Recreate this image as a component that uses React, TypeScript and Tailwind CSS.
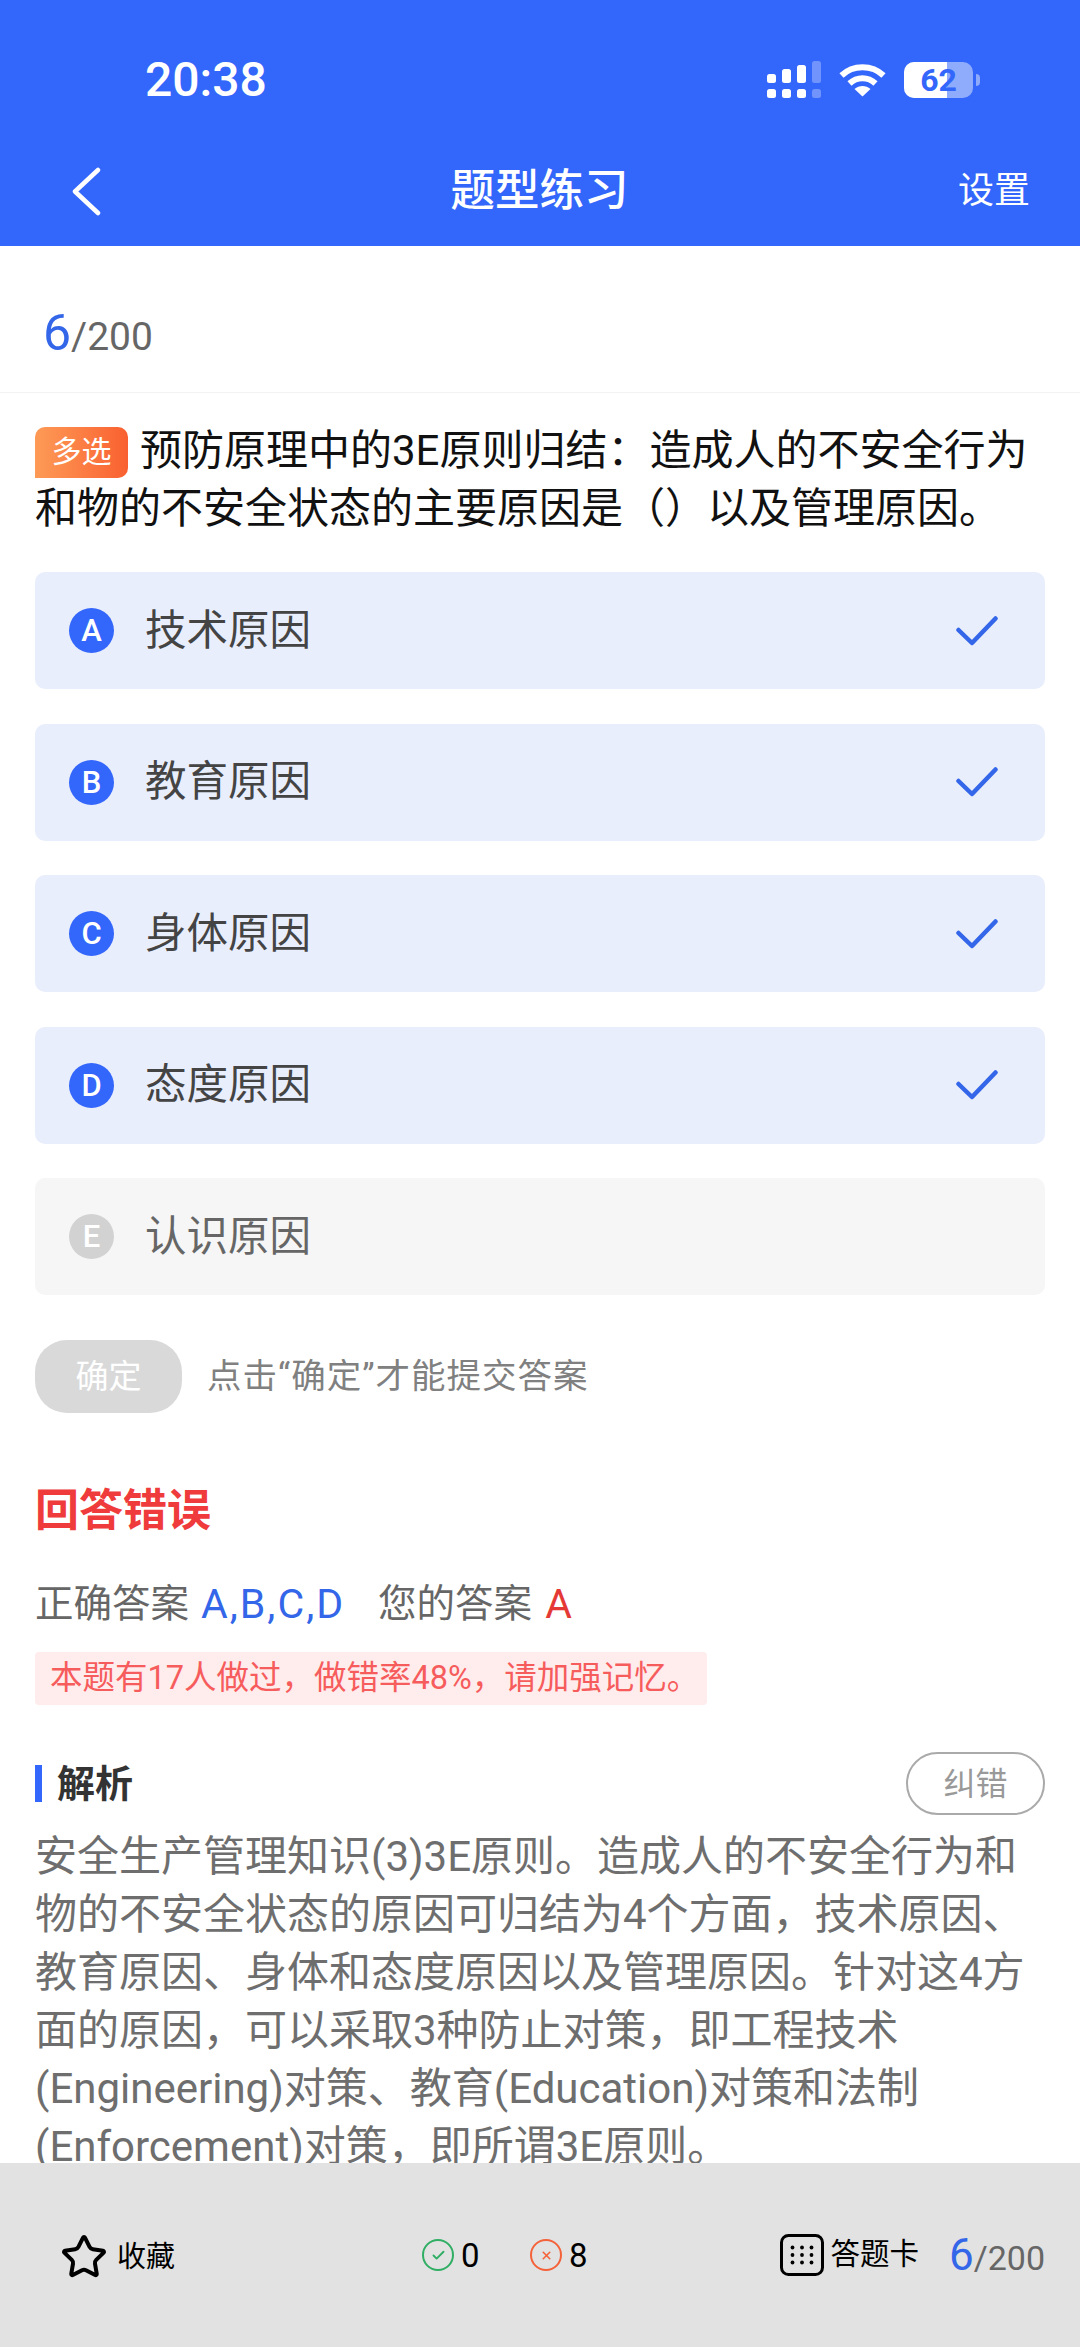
import { Check, Star, X } from "lucide-react";

const FONT = "[font-family:Roboto,'Noto_Sans_CJK_SC',sans-serif]";

const options = [
  { letter: "A", text: "技术原因", selected: true },
  { letter: "B", text: "教育原因", selected: true },
  { letter: "C", text: "身体原因", selected: true },
  { letter: "D", text: "态度原因", selected: true },
  { letter: "E", text: "认识原因", selected: false },
];

function SignalIcon() {
  return (
    <svg width="54" height="38" viewBox="0 0 54 38" fill="#fff">
      <rect x="0" y="13" width="9" height="9" rx="2.5" />
      <rect x="15" y="8" width="9" height="14" rx="2.5" />
      <rect x="30" y="4" width="9" height="18" rx="2.5" />
      <rect x="45" y="0" width="9" height="22" rx="2.5" opacity="0.3" />
      <rect x="0" y="28" width="9" height="9" rx="2.5" />
      <rect x="15" y="28" width="9" height="9" rx="2.5" />
      <rect x="30" y="28" width="9" height="9" rx="2.5" />
      <rect x="45" y="28" width="9" height="9" rx="2.5" opacity="0.3" />
    </svg>
  );
}

function WifiIcon() {
  return (
    <svg width="47" height="34" viewBox="0 0 47 34" fill="none" stroke="#fff" strokeWidth="6">
      <path d="M2.5 12.5C14 1.5 33 1.5 44.500 12.5" />
      <path d="M10.500 20.500C18 13.500 29 13.500 36.500 20.500" />
      <path d="M23.500 33.500L15.500 26C20 22 27 22 31.500 26Z" fill="#fff" stroke="none" />
    </svg>
  );
}

function BatteryIcon() {
  return (
    <div className="flex items-center gap-[3px]">
      <div className="relative h-[36px] w-[69px] rounded-[10px] bg-white/45">
        <div className="h-full w-[43px] rounded-l-[10px] bg-white" />
        <span className="absolute inset-0 flex items-center justify-center text-[32px] font-bold leading-none text-[#3366fa]">
          62
        </span>
      </div>
      <div className="h-[12px] w-[4px] rounded-r-full bg-white/45" />
    </div>
  );
}

function BackIcon() {
  return (
    <svg width="30" height="49" viewBox="0 0 30 49" fill="none" stroke="#fff" strokeWidth="4.500" strokeLinecap="round" strokeLinejoin="round">
      <path d="M27 3L4 24.500L27 46" />
    </svg>
  );
}

function OptionCheck() {
  return (
    <svg width="42" height="30" viewBox="0 0 42 30" fill="none" stroke="#3366e8" strokeWidth="4.500" strokeLinecap="round" strokeLinejoin="round">
      <path d="M2.500 14L16 27L39.500 2.500" />
    </svg>
  );
}

function GridIcon() {
  return (
    <svg width="44" height="42" viewBox="0 0 44 42" fill="none">
      <rect x="1.500" y="1.500" width="41" height="39" rx="7" stroke="#000" strokeWidth="3" />
      {[13.5, 21, 28.5].map((y) =>
        [12.5, 22, 31.5].map((x) => <circle key={`${x}-${y}`} cx={x} cy={y} r="1.900" fill="#000" />),
      )}
    </svg>
  );
}

function Progress({ large, small }: { large: string; small: string }) {
  return (
    <span className="leading-none text-[#666]">
      <span className={`${large} text-[#3366e8]`}>6</span>
      <span className={small}>/200</span>
    </span>
  );
}

export default function App() {
  return (
    <div className={`flex h-[2347px] w-[1080px] flex-col overflow-hidden bg-white ${FONT}`}>
      {/* Header */}
      <header className="h-[246px] shrink-0 bg-[#3366fa] text-white">
        <div className="flex h-[120px] items-center justify-between pl-[145px] pr-[100px] pt-[40px]">
          <span className="text-[48px] font-medium leading-none">20:38</span>
          <div className="flex items-center gap-[18px]">
            <SignalIcon />
            <WifiIcon />
            <BatteryIcon />
          </div>
        </div>
        <div className="flex h-[126px] items-center justify-between pl-[71px] pr-[50px] pt-[16px]">
          <BackIcon />
          <h1 className="ml-[20px] text-[44.500px] font-medium leading-none">题型练习</h1>
          <span className="text-[36px] leading-none">设置</span>
        </div>
      </header>

      {/* Scrollable body */}
      <main className="min-h-0 flex-1 overflow-hidden">
        <div className="flex h-[147px] items-center border-b border-[#f3f3f3] pl-[43px] pt-[28px]">
          <Progress large="text-[50px]" small="text-[39px]" />
        </div>

        <div className="px-[35px]">
          <p className="mt-[29px] text-[42px] leading-[58px] text-[#111]">
            <span className="mr-[12px] inline-flex h-[51px] w-[93px] items-center justify-center rounded-tl-[10px] rounded-r-[10px] bg-gradient-to-r from-[#fd9a56] to-[#f95f30] align-[3px] text-[30px] leading-none text-white">
              多选
            </span>
            预防原理中的3E原则归结：造成人的不安全行为和物的不安全状态的主要原因是（）以及管理原因。
          </p>

          <div className="mt-[34px] flex flex-col gap-[34.500px]">
            {options.map((option) => (
              <div
                key={option.letter}
                className={`flex h-[117px] items-center rounded-[10px] pl-[34px] pr-[47px] ${
                  option.selected ? "bg-[#e9eefd]" : "bg-[#f6f6f6]"
                }`}
              >
                <span
                  className={`flex h-[45px] w-[45px] items-center justify-center rounded-full text-[31px] font-medium leading-none text-white ${
                    option.selected ? "bg-[#3366fa]" : "bg-[#d2d2d2]"
                  }`}
                >
                  {option.letter}
                </span>
                <span className={`ml-[31px] flex-1 text-[41.500px] leading-none ${option.selected ? "text-[#444]" : "text-[#666]"}`}>
                  {option.text}
                </span>
                {option.selected && <OptionCheck />}
              </div>
            ))}
          </div>

          <div className="mt-[45px] flex items-center">
            <span className="flex h-[73px] w-[147px] items-center justify-center rounded-[32px] bg-[#d9d9d9] text-[33px] leading-none text-white">
              确定
            </span>
            <span className="ml-[25px] text-[34.500px] leading-none tracking-[1px] text-[#808080]">点击“确定”才能提交答案</span>
          </div>

          <h2 className="mt-[76px] text-[44px] font-bold leading-none text-[#ef3b3b]">回答错误</h2>

          <p className="mt-[51px] flex items-center text-[38.500px] leading-none text-[#666]">
            <span>正确答案</span>
            <span className="ml-[12px] text-[41px] tracking-[2px] text-[#3366e8]">A,B,C,D</span>
            <span className="ml-[33px]">您的答案</span>
            <span className="ml-[13px] text-[41px] text-[#e53935]">A</span>
          </p>

          <div className="mt-[27px] flex h-[53px] w-[672px] items-center rounded-[4px] bg-[#ffecec] pl-[15px] text-[32.500px] leading-none text-[#f65c5c]">
            本题有17人做过，做错率48%，请加强记忆。
          </div>

          <div className="mt-[47px] flex h-[63px] items-center justify-between">
            <div className="flex items-center">
              <span className="h-[37px] w-[7px] bg-[#3366fa]" />
              <span className="ml-[15px] text-[38px] font-bold leading-none text-[#333]">解析</span>
            </div>
            <span className="flex h-[63px] w-[139px] items-center justify-center rounded-full border-2 border-[#aaa] text-[32px] leading-none text-[#999]">
              纠错
            </span>
          </div>

          <p className="mt-[13px] text-[42px] leading-[58px] text-[#6e6e6e]">
            安全生产管理知识(3)3E原则。造成人的不安全行为和物的不安全状态的原因可归结为4个方面，技术原因、教育原因、身体和态度原因以及管理原因。针对这4方面的原因，可以采取3种防止对策，即工程技术(Engineering)对策、教育(Education)对策和法制(Enforcement)对策，即所谓3E原则。
          </p>
        </div>
      </main>

      {/* Bottom bar */}
      <footer className="flex h-[184px] shrink-0 items-start bg-[#e2e2e2] pl-[60px] pr-[35px] pt-[70px]">
        <div className="flex w-[362px] items-center">
          <Star size={48} strokeWidth={2} className="text-black" />
          <span className="ml-[9px] text-[29px] leading-none text-black">收藏</span>
        </div>
        <div className="flex h-[44px] items-center text-[33px] leading-none text-black">
          <span className="flex h-[32px] w-[32px] items-center justify-center rounded-full border-2 border-[#2fae64]">
            <Check size={15} strokeWidth={3} className="text-[#2fae64]" />
          </span>
          <span className="ml-[7px] w-[69px]">0</span>
          <span className="flex h-[32px] w-[32px] items-center justify-center rounded-full border-2 border-[#f4623a]">
            <X size={13} strokeWidth={3} className="text-[#f4623a]" />
          </span>
          <span className="ml-[7px]">8</span>
        </div>
        <div className="ml-auto flex h-[44px] items-center">
          <GridIcon />
          <span className="ml-[6px] text-[29.500px] leading-none text-black">答题卡</span>
          <span className="ml-[30px]">
            <Progress large="text-[44px]" small="text-[34px]" />
          </span>
        </div>
      </footer>
    </div>
  );
}
